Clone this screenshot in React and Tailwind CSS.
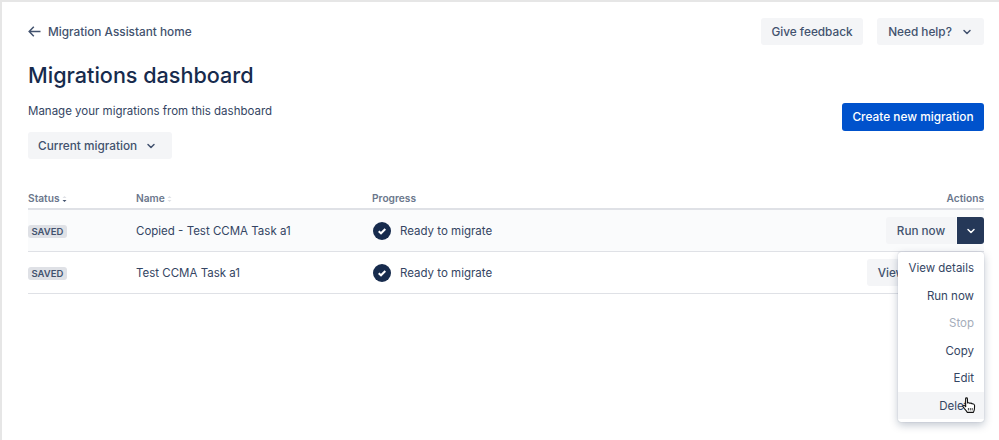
import { ChevronDown } from 'lucide-react'

const rows = [
  { name: 'Copied - Test CCMA Task a1', action: 'Run now', open: true },
  { name: 'Test CCMA Task a1', action: 'View details', open: false },
]

const menuItems = ['View details', 'Run now', 'Stop', 'Copy', 'Edit', 'Delete']

function SortIcon({ dark }) {
  return (
    <svg width="5" height="8" viewBox="0 0 5 8" className="ml-[2px] mt-[1px]">
      <path d="M0.5 3 L2.5 1 L4.5 3 Z" fill="#dfe1e6" />
      <path d="M0.5 5 L2.5 7 L4.5 5 Z" fill={dark ? '#42526e' : '#dfe1e6'} />
    </svg>
  )
}

function BackArrow() {
  return (
    <svg width="13" height="11" viewBox="0 0 13 11" className="shrink-0">
      <path d="M12.5 5.5 H1.2 M5.8 0.8 L1.2 5.5 L5.8 10.2" fill="none" stroke="#42526e" strokeWidth="1.5" />
    </svg>
  )
}

function CheckCircle() {
  return (
    <svg width="18" height="18" viewBox="0 0 18 18" className="shrink-0">
      <circle cx="9" cy="9" r="9" fill="#172b4d" />
      <path d="M5.7 9.2 L8 11.3 L12.3 7" fill="none" stroke="#fff" strokeWidth="2" />
    </svg>
  )
}

function HandCursor() {
  return (
    <svg width="14" height="17" viewBox="0 0 14 17" className="absolute left-[64px] top-[145px]">
      <path
        d="M3.6 1.8 C3.6 0.6 5.4 0.6 5.4 1.8 L5.6 6 C6.6 5.6 7.4 5.7 7.9 6.3 C8.9 5.9 9.7 6.2 10 6.9 C11.2 6.6 12.6 7.2 12.6 8.8 L12.4 12.2 C12.3 13.4 11.8 14.2 11.4 15.4 L5.2 15.4 C4.8 14.2 3.6 12.9 2.4 11.6 L1.1 9.9 C0.4 8.9 1.6 7.8 2.6 8.6 L3.7 9.7 Z"
        fill="#fff"
        stroke="#111"
        strokeWidth="1.1"
        strokeLinejoin="round"
      />
      <path d="M6.4 11 V13.4 M8.3 11 V13.4 M10.2 11 V13.4" stroke="#111" strokeWidth="0.8" />
    </svg>
  )
}

export default function App() {
  return (
    <div
      className="relative h-[440px] w-[999px] overflow-hidden border-t-2 border-l-2 border-[#e6e6e6] bg-white pl-[26px] pr-[15px] text-[11.5px] text-[#42526e]"
      style={{ fontFamily: 'Inter, "Liberation Sans", sans-serif' }}
    >
      {/* Top nav */}
      <div className="mt-[16px] flex h-[27px] items-center justify-between">
        <div className="flex items-center gap-[7px] text-[11.8px] font-medium">
          <BackArrow />
          <span className="pt-[2px]">Migration Assistant home</span>
        </div>
        <div className="flex gap-[14px] font-medium">
          <button className="h-[27px] w-[102px] rounded-[3px] bg-[#f4f5f7] pt-[2px] text-[11.8px]">Give feedback</button>
          <button className="flex h-[27px] w-[107px] items-center justify-center gap-[9px] rounded-[3px] bg-[#f4f5f7] text-[11.8px]">
            <span className="pt-[2px]">Need help?</span>
            <ChevronDown size={12} strokeWidth={3} />
          </button>
        </div>
      </div>

      {/* Heading */}
      <h1 className="mt-[14px] text-[21.6px] font-medium leading-[32px] text-[#172b4d]">Migrations dashboard</h1>
      <div className="flex items-start justify-between">
        <div>
          <p className="mt-[12px] leading-[16px] text-[#344563]">Manage your migrations from this dashboard</p>
          <button className="mt-[13px] flex h-[27px] w-[144px] items-center gap-[8px] rounded-[3px] bg-[#f4f5f7] pl-[10px] text-[11.8px] font-medium">
            <span className="pt-[2px]">Current migration</span>
            <ChevronDown size={12} strokeWidth={3} />
          </button>
        </div>
        <button className="mt-[12px] h-[28px] w-[142px] rounded-[3px] bg-[#0052cc] pt-[2px] text-[11.85px] font-medium text-white">
          Create new migration
        </button>
      </div>

      {/* Table */}
      <div className="mt-[29px]">
        <div className="flex h-[22px] items-start border-b-2 border-[#dfe1e6] pt-[3px] text-[10.2px] font-semibold text-[#6b778c]">
          <div className="flex w-[108px] items-center">
            Status
            <SortIcon dark />
          </div>
          <div className="flex w-[236px] items-center">
            Name
            <SortIcon />
          </div>
          <div className="flex-1">Progress</div>
          <div>Actions</div>
        </div>
        {rows.map((row) => (
          <div
            key={row.name}
            className={`flex h-[42px] items-center border-b border-[#dfe1e6] ${row.open ? 'bg-[#fafbfc]' : ''}`}
          >
            <div className="w-[108px] pt-[2px]">
              <span className="inline-block rounded-[3px] bg-[#dfe1e6] px-[3.5px] text-[9.5px] font-semibold leading-[13px] text-[#42526e]">
                SAVED
              </span>
            </div>
            <div className="w-[237px] pt-[2px] text-[#344563]">{row.name}</div>
            <div className="flex flex-1 items-center gap-[9px] text-[#344563]">
              <CheckCircle />
              <span className="pt-[2px]">Ready to migrate</span>
            </div>
            <div className="flex gap-px text-[11.7px] font-medium">
              <button className={`h-[27px] rounded-l-[3px] bg-[#f4f5f7] pt-[2px] ${row.open ? 'w-[70px]' : 'w-[89px]'}`}>
                {row.action}
              </button>
              <button className="flex h-[27px] w-[27px] items-center justify-center rounded-r-[3px] bg-[#253858] text-white">
                <ChevronDown size={12} strokeWidth={3} />
              </button>
            </div>
          </div>
        ))}
      </div>

      {/* Open actions menu */}
      <div className="absolute left-[896px] top-[250px] w-[86px] rounded-[3px] bg-white pb-[3px] pt-[2px] shadow-[0_3px_8px_rgba(9,30,66,0.25),0_0_1px_rgba(9,30,66,0.3)]">
        {menuItems.map((item) => (
          <div
            key={item}
            className={`flex h-[27.5px] items-center justify-end pr-[10px] ${
              item === 'Stop' ? 'text-[#a5adba]' : 'text-[#344563]'
            } ${item === 'Delete' ? 'bg-[#f4f5f7]' : ''}`}
          >
            <span className="pt-[2px]">{item}</span>
          </div>
        ))}
        <HandCursor />
      </div>
    </div>
  )
}
